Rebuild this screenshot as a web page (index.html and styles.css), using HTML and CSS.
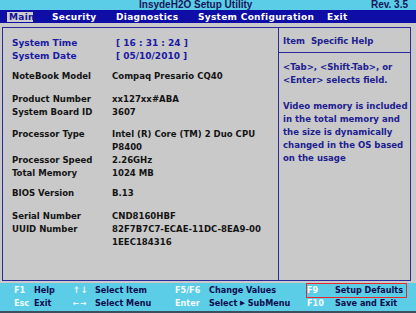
FILE: index.html
```html
<!DOCTYPE html>
<html>
<head>
<meta charset="utf-8">
<link rel="stylesheet" href="styles.css">
</head>
<body>
<div class="titlebar">
  <span class="title">InsydeH2O Setup Utility</span>
  <span class="rev">Rev. 3.5</span>
</div>
<div class="menu">
  <span class="mi mi-main active">Main</span>
  <span class="mi mi-sec">Security</span>
  <span class="mi mi-diag">Diagnostics</span>
  <span class="mi mi-sys">System Configuration</span>
  <span class="mi mi-exit">Exit</span>
</div>
<div class="frame">
  <div class="info">
    <div class="row hi r-time"><span class="lbl">System Time</span><span class="val">[ 16 : 31 : 24 ]</span></div>
    <div class="row hi"><span class="lbl">System Date</span><span class="val">[ 05/10/2010 ]</span></div>
    <div class="row r-model"><span class="lbl">NoteBook Model</span><span class="val">Compaq Presario CQ40</span></div>
    <div class="row r-gap"><span class="lbl">Product Number</span><span class="val">xx127xx#ABA</span></div>
    <div class="row"><span class="lbl">System Board ID</span><span class="val">3607</span></div>
    <div class="row r-proc"><span class="lbl">Processor Type</span><span class="val">Intel (R) Core (TM) 2 Duo CPU</span></div>
    <div class="row"><span class="lbl"></span><span class="val">P8400</span></div>
    <div class="row"><span class="lbl">Processor Speed</span><span class="val">2.26GHz</span></div>
    <div class="row"><span class="lbl">Total Memory</span><span class="val">1024 MB</span></div>
    <div class="row r-bios"><span class="lbl">BIOS Version</span><span class="val">B.13</span></div>
    <div class="row r-gap"><span class="lbl">Serial Number</span><span class="val">CND8160HBF</span></div>
    <div class="row"><span class="lbl">UUID Number</span><span class="val">82F7B7C7-ECAE-11DC-8EA9-00</span></div>
    <div class="row"><span class="lbl"></span><span class="val">1EEC184316</span></div>
  </div>
  <div class="help">
    <div class="help-head">Item&nbsp; Specific Help</div>
    <div class="help-body">
      <p>&lt;Tab&gt;, &lt;Shift-Tab&gt;, or<br>&lt;Enter&gt; selects field.</p>
      <p>Video memory is included<br>in the total memory and<br>the size is dynamically<br>changed in the OS based<br>on the usage</p>
    </div>
  </div>
</div>
<div class="footer">
  <div class="frow">
    <div class="g g1"><span class="k">F1</span><span class="l">Help</span></div>
    <div class="g g2"><span class="k arr">↑↓</span><span class="l">Select Item</span></div>
    <div class="g g3"><span class="k">F5/F6</span><span class="l">Change Values</span></div>
    <div class="g g4 boxed"><span class="k">F9</span><span class="l">Setup Defaults</span></div>
  </div>
  <div class="frow">
    <div class="g g1"><span class="k">Esc</span><span class="l">Exit</span></div>
    <div class="g g2"><span class="k arr small">←→</span><span class="l">Select Menu</span></div>
    <div class="g g3"><span class="k">Enter</span><span class="l">Select <span class="tri">▶</span> SubMenu</span></div>
    <div class="g g4"><span class="k">F10</span><span class="l">Save and Exit</span></div>
  </div>
</div>
</body>
</html>
```
FILE: styles.css
```css
* { box-sizing: border-box; }
html, body { margin: 0; padding: 0; }
body {
  width: 416px;
  height: 313px;
  overflow: hidden;
  background: #c9c9c9;
  font-family: "DejaVu Sans Condensed", "DejaVu Sans", sans-serif;
  font-weight: bold;
}
.titlebar {
  height: 10px;
  background: #5bcde6;
  display: flex;
  align-items: center;
  color: #15155a;
  font: bold 10px/10px "Liberation Sans", sans-serif;
  padding-left: 139px;
  padding-right: 8px;
}
.rev { margin-left: auto; }
.menu {
  height: 13px;
  background: #0e0ea6;
  display: flex;
  align-items: center;
  padding-left: 7px;
  color: #ffffff;
  font: bold 9px/10px "DejaVu Sans", sans-serif;
  letter-spacing: 0.3px;
}
.mi { padding-left: 2px; white-space: nowrap; }
.mi-main { width: 26px; margin-right: 17px; }
.mi-sec { width: 64px; }
.mi-diag { width: 82px; }
.mi-sys { width: 129px; }
.active { background: #cdcdcd; color: #12129a; height: 10px; }
.frame {
  margin: 4px 0 0 2px;
  width: 409px;
  height: 254px;
  border: 1px solid #2a2a9c;
  display: grid;
  grid-template-columns: 275px 1fr;
}
.info {
  padding: 9px 0 0 9px;
  color: #141414;
  font: bold 9.5px/13px "DejaVu Sans Condensed", "DejaVu Sans", sans-serif;
}
.row { display: flex; height: 13px; white-space: nowrap; }
.lbl { width: 100px; flex: none; }
.hi { color: #1a1aa2; font-family: "DejaVu Sans", sans-serif; font-size: 9px; }
.hi .val { padding-left: 4px; }
.r-model { margin-top: 6px; }
.r-gap { margin-top: 10px; }
.r-proc { margin-top: 9px; }
.r-bios { margin-top: 7px; }
.help {
  border-left: 1px solid #2a2a9c;
  color: #202090;
  font: bold 9.5px/13px "DejaVu Sans Condensed", "DejaVu Sans", sans-serif;
}
.help-head {
  height: 25px;
  border-bottom: 1px solid #2a2a9c;
  padding: 6px 0 0 4px;
}
.help-body { padding: 7px 0 0 4px; }
.help-body p { margin: 0 0 13px 0; white-space: nowrap; }
.footer {
  margin-top: 2px;
  height: 30px;
  background: #5bcde6;
  padding-top: 1px;
  border-bottom: 2px solid #3d4f5e;
  font: bold 9px/13px "DejaVu Sans Condensed", "DejaVu Sans", sans-serif;
}
.frow { display: flex; height: 13px; padding-left: 14px; }
.g { display: flex; white-space: nowrap; height: 13px; }
.g1 { width: 59px; }
.g2 { width: 102px; }
.g3 { width: 132px; }
.g4 { width: 99px; }
.k { color: #f4fbff; flex: none; }
.l { color: #0c0c4e; }
.g1 .k { width: 20px; }
.g2 .k { width: 22px; }
.g3 .k { width: 34px; }
.g4 .k { width: 28px; }
.arr { font-size: 9px; letter-spacing: 1px; }
.small { font-size: 8px; }
.tri { font-size: 7px; vertical-align: 1px; }
.boxed { outline: 1px solid #e42a2a; }
```
